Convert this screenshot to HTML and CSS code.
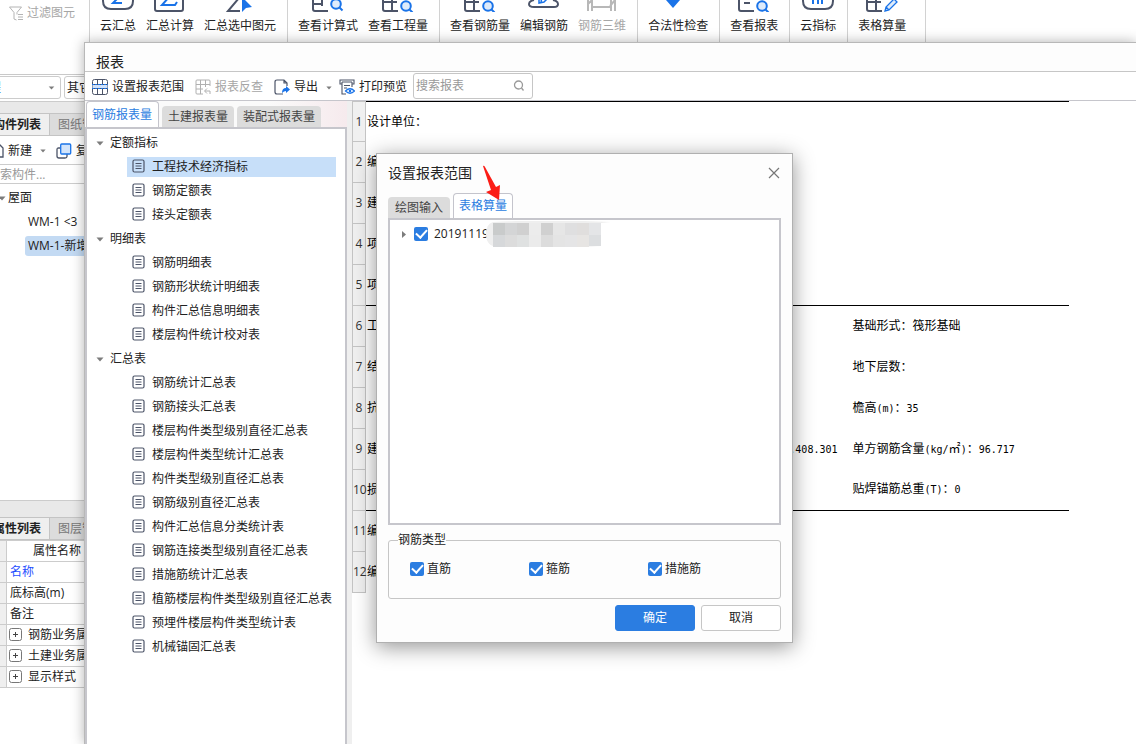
FILE: index.html
```html
<!DOCTYPE html>
<html lang="zh-CN">
<head>
<meta charset="utf-8">
<title>报表</title>
<link rel="stylesheet" href="styles.css">
</head>
<body>
<svg class="defs" width="0" height="0" aria-hidden="true">
  <symbol id="doc" viewBox="0 0 13 14"><rect x="1" y="1" width="11" height="12" rx="1.5" fill="none" stroke="#4c5468" stroke-width="1.2"/><path d="M3.5 4.5h6M3.5 7h6M3.5 9.5h6" stroke="#4c5468" stroke-width="1"/></symbol>
  <symbol id="down" viewBox="0 0 8 5"><path d="M0.5 0.5h7L4 4.5z" fill="#7c7c7c"/></symbol>
  <symbol id="plus" viewBox="0 0 13 13"><rect x=".5" y=".5" width="12" height="12" rx="2" fill="#fff" stroke="#777"/><path d="M4 6.500h5M6.500 4v5" stroke="#444"/></symbol>
  <symbol id="lens" viewBox="0 0 14 14"><circle cx="6" cy="6" r="4.800" fill="#deebfb" stroke="#1a73e8" stroke-width="2"/><path d="M9.500 9.500l3 3" stroke="#1a73e8" stroke-width="2"/></symbol>
</svg>

<div class="app">
  <nav class="ribbon">
    <div class="group filter">
      <button class="flat muted"><svg width="14" height="15" viewBox="0 0 14 15" fill="none" stroke="#b4b4b4"><path d="M.5 1h12L8 6.500v2M.5 1L5 6.500V13l2.500 1M9 8.500h5M9 11h5M9 13.500h5"/></svg>过滤图元</button>
    </div>
    <div class="group">
      <button class="tool"><svg width="32" height="12" fill="none" stroke-width="2"><path d="M1 0v1q0 8 8 8h14q8 0 8-8V0" stroke="#4c5468"/><path d="M17-3l-6 6h9" stroke="#1a73e8"/></svg>云汇总</button>
      <button class="tool"><svg width="32" height="12" fill="none" stroke-width="2"><path d="M1 0v9q0 2 2 2h24q2 0 2-2V0" stroke="#4c5468"/><path d="M16-4L8 5h13l2-3" stroke="#1a73e8"/></svg>汇总计算</button>
      <button class="tool"><svg width="32" height="12" fill="none"><path d="M15-2L4 11h12" stroke="#4c5468" stroke-width="2"/><path d="M18-3v15l4-4 6-1z" fill="#1a73e8"/></svg>汇总选中图元</button>
    </div>
    <div class="group">
      <button class="tool"><svg width="32" height="12" fill="none" stroke="#4c5468" stroke-width="2"><path d="M1 0v9q0 2 2 2h13M2 4h8V0M10 4v2"/><use href="#lens" x="18" y="-2" width="14" height="14"/></svg>查看计算式</button>
      <button class="tool"><svg width="32" height="12" fill="none" stroke="#4c5468" stroke-width="2"><path d="M1 0v9q0 2 2 2h13M2 2h13M10 0v11"/><use href="#lens" x="18" y="0" width="14" height="14"/></svg>查看工程量</button>
    </div>
    <div class="group">
      <button class="tool"><svg width="32" height="12" fill="none" stroke="#4c5468" stroke-width="2"><path d="M1 0v9q0 2 2 2h13M2 2h13M10 0v11"/><use href="#lens" x="18" y="0" width="14" height="14"/></svg>查看钢筋量</button>
      <button class="tool"><svg width="32" height="12" fill="none" stroke-width="2"><path d="M6 0Q1 1 1 4q0 3 5 3h20q4 0 4-3 0-3-5-4" stroke="#4c5468"/><path d="M11-3v6l5-1 5-5M14-3l-1 5" stroke="#1a73e8" stroke-width="1.500"/></svg>编辑钢筋</button>
      <button class="tool muted"><svg width="32" height="12" fill="none" stroke="#b8b8b8" stroke-width="2"><path d="M2 0v11M6 0v11M2 4l4-4M7 7h18M25 0v11M29 0v11M24 6l5-6"/></svg>钢筋三维</button>
    </div>
    <div class="group">
      <button class="tool"><svg width="32" height="12"><path d="M4 0h14l-7 8z" fill="#1a73e8"/></svg>合法性检查</button>
    </div>
    <div class="group">
      <button class="tool"><svg width="32" height="12" fill="none" stroke="#4c5468" stroke-width="2"><path d="M1 0v9q0 2 2 2h13M6 3h6"/><use href="#lens" x="18" y="0" width="14" height="14"/></svg>查看报表</button>
    </div>
    <div class="group">
      <button class="tool"><svg width="32" height="12" fill="none" stroke-width="2"><path d="M1 0v1q0 8 8 8h14q8 0 8-8V0" stroke="#4c5468"/><path d="M11 0v4M16 0v4M20 0v4" stroke="#1a73e8"/></svg>云指标</button>
    </div>
    <div class="group last">
      <button class="tool"><svg width="32" height="12" fill="none"><path d="M1 0v9q0 2 2 2h13M2 2h13M10 0v11" stroke="#4c5468" stroke-width="2"/><path d="M19 11l1-4 8-8 3 3-8 8zM20 7l3 3" stroke="#1a73e8" stroke-width="1.300" fill="#deebfb"/></svg>表格算量</button>
    </div>
  </nav>

  <aside class="sidebar">
    <div class="pickers">
      <button class="picker blue"><span>程</span><svg width="7" height="4"><use href="#down"/></svg></button>
      <button class="picker">其它</button>
    </div>
    <section class="components">
      <div class="side-tabs"><button class="side-tab on">构件列表</button><button class="side-tab">图纸管</button></div>
      <div class="side-tools">
        <button class="flat"><svg width="12" height="14" viewBox="0 0 12 14" fill="none" stroke="#4c5468" stroke-width="1.300"><path d="M2 1h6l3 3v9H2z"/></svg>新建</button>
        <svg class="drop" width="6" height="4"><use href="#down"/></svg>
        <button class="flat"><svg width="16" height="16" viewBox="0 0 16 16"><path d="M4 5H2.500Q1 5 1 6.500V13q0 2 2 2h6q2 0 2-1.500V11" fill="none" stroke="#4c5468" stroke-width="1.300"/><rect x="4.700" y="1" width="10" height="10" rx="1" fill="#d2e4fb" stroke="#1a73e8" stroke-width="1.300"/></svg>复</button>
      </div>
      <input class="side-search" type="text" placeholder="搜索构件..." aria-label="搜索构件">
      <ul class="side-tree">
        <li class="root"><svg width="8" height="5"><use href="#down"/></svg>屋面</li>
        <li><span>WM-1 &lt;3</span></li>
        <li class="on"><span>WM-1-新增</span></li>
      </ul>
    </section>
    <section class="props">
      <div class="side-tabs"><button class="side-tab on">属性列表</button><button class="side-tab">图层管</button></div>
      <table class="prop-table">
        <tr><th></th><th scope="col" class="head">属性名称</th></tr>
        <tr><th></th><td class="name">名称</td></tr>
        <tr><th></th><td>底标高(m)</td></tr>
        <tr><th></th><td>备注</td></tr>
        <tr><th></th><td><svg width="13" height="13"><use href="#plus"/></svg>钢筋业务属</td></tr>
        <tr><th></th><td><svg width="13" height="13"><use href="#plus"/></svg>土建业务属</td></tr>
        <tr><th></th><td><svg width="13" height="13"><use href="#plus"/></svg>显示样式</td></tr>
      </table>
    </section>
  </aside>
</div>

<main class="report-window">
  <h1 class="title">报表</h1>
  <div class="toolbar">
    <button class="flat"><svg width="16" height="16" viewBox="0 0 16 16" fill="none" stroke="#4c5468"><path d="M.5 5V2.500q0-2 2-2h11q2 0 2 2V5M.5 10v3.500q0 2 2 2h11q2 0 2-2V10M5.500 1v4M10.500 1v4M5.500 10v5M10.500 10v5"/><path d="M0 5.500h16v4H0z" fill="#cfe2fb"/><path d="M0 5.500h16M0 9.500h16" stroke="#1a73e8" stroke-dasharray="2 1"/></svg>设置报表范围</button>
    <button class="flat muted"><svg width="16" height="16" viewBox="0 0 16 16" fill="none" stroke="#b0b0b0"><path d="M15 7V2q0-1-1-1H2Q1 1 1 2v12q0 1 1 1h6M1 5.500h14M1 10h7M5.500 1v14M10.500 1v7M15 15v-3h-5M12 9.500L9.500 12l2.500 2.500"/></svg>报表反查</button>
    <button class="flat"><svg width="16" height="16" viewBox="0 0 16 16" fill="none"><path d="M9 15H3q-2 0-2-2V3q0-2 2-2h7l3 3v3M10 1v3h3" stroke="#4c5468" stroke-width="1.200"/><path d="M8 14q0-5 4-5V7l4 3.500-4 3.500v-2q-2 0-4 2z" fill="#1a73e8"/></svg>导出</button>
    <svg class="drop" width="6" height="4"><use href="#down"/></svg>
    <button class="flat"><svg width="16" height="16" viewBox="0 0 16 16" fill="none"><path d="M3 5H1V1h14v4h-2M3 3h10M3 3v12h4M13 3v5M5 6.500h6M5 9h3" stroke="#4c5468" stroke-width="1.100"/><path d="M6.500 12Q11 7.500 15.500 12 11 16.500 6.500 12z" fill="#fff" stroke="#1a73e8" stroke-width="1.200"/><circle cx="11" cy="12" r="1.300" fill="#1a73e8"/></svg>打印预览</button>
    <label class="search"><input type="text" placeholder="搜索报表" aria-label="搜索报表"><svg width="12" height="12" viewBox="0 0 12 12" fill="none" stroke="#999" stroke-width="1.300"><circle cx="5.500" cy="5" r="4"/><path d="M8.500 8l2 2.500"/></svg></label>
  </div>
  <div class="work">
    <section class="pane">
      <div class="tabs">
        <button class="tab on">钢筋报表量</button><button class="tab">土建报表量</button><button class="tab">装配式报表量</button>
      </div>
      <div class="tree">
        <h2><svg width="8" height="5"><use href="#down"/></svg>定额指标</h2>
        <ul>
          <li class="on"><svg width="13" height="14"><use href="#doc"/></svg>工程技术经济指标</li>
          <li><svg width="13" height="14"><use href="#doc"/></svg>钢筋定额表</li>
          <li><svg width="13" height="14"><use href="#doc"/></svg>接头定额表</li>
        </ul>
        <h2><svg width="8" height="5"><use href="#down"/></svg>明细表</h2>
        <ul>
          <li><svg width="13" height="14"><use href="#doc"/></svg>钢筋明细表</li>
          <li><svg width="13" height="14"><use href="#doc"/></svg>钢筋形状统计明细表</li>
          <li><svg width="13" height="14"><use href="#doc"/></svg>构件汇总信息明细表</li>
          <li><svg width="13" height="14"><use href="#doc"/></svg>楼层构件统计校对表</li>
        </ul>
        <h2><svg width="8" height="5"><use href="#down"/></svg>汇总表</h2>
        <ul>
          <li><svg width="13" height="14"><use href="#doc"/></svg>钢筋统计汇总表</li>
          <li><svg width="13" height="14"><use href="#doc"/></svg>钢筋接头汇总表</li>
          <li><svg width="13" height="14"><use href="#doc"/></svg>楼层构件类型级别直径汇总表</li>
          <li><svg width="13" height="14"><use href="#doc"/></svg>楼层构件类型统计汇总表</li>
          <li><svg width="13" height="14"><use href="#doc"/></svg>构件类型级别直径汇总表</li>
          <li><svg width="13" height="14"><use href="#doc"/></svg>钢筋级别直径汇总表</li>
          <li><svg width="13" height="14"><use href="#doc"/></svg>构件汇总信息分类统计表</li>
          <li><svg width="13" height="14"><use href="#doc"/></svg>钢筋连接类型级别直径汇总表</li>
          <li><svg width="13" height="14"><use href="#doc"/></svg>措施筋统计汇总表</li>
          <li><svg width="13" height="14"><use href="#doc"/></svg>植筋楼层构件类型级别直径汇总表</li>
          <li><svg width="13" height="14"><use href="#doc"/></svg>预埋件楼层构件类型统计表</li>
          <li><svg width="13" height="14"><use href="#doc"/></svg>机械锚固汇总表</li>
        </ul>
      </div>
    </section>
    <section class="sheet">
      <table class="report">
        <colgroup><col class="c-num"><col class="c-a"><col class="c-b"><col class="c-c"></colgroup>
        <tr class="rule first"><th scope="row">1</th><td>设计单位：</td><td></td><td></td></tr>
        <tr><th scope="row">2</th><td>编</td><td></td><td></td></tr>
        <tr><th scope="row">3</th><td>建</td><td></td><td></td></tr>
        <tr><th scope="row">4</th><td>项</td><td></td><td></td></tr>
        <tr><th scope="row">5</th><td>项</td><td></td><td></td></tr>
        <tr class="rule"><th scope="row">6</th><td>工</td><td></td><td>基础形式：筏形基础</td></tr>
        <tr><th scope="row">7</th><td>结</td><td></td><td>地下层数：</td></tr>
        <tr><th scope="row">8</th><td>抗</td><td></td><td>檐高<span class="half">(m)</span>：<span class="half">35</span></td></tr>
        <tr><th scope="row">9</th><td>建</td><td class="end"><span class="half">.408.301</span></td><td>单方钢筋含量<span class="half">(kg/</span>㎡<span class="half">)</span>：<span class="half">96.717</span></td></tr>
        <tr><th scope="row">10</th><td>损</td><td></td><td>贴焊锚筋总重<span class="half">(T)</span>：<span class="half">0</span></td></tr>
        <tr class="rule"><th scope="row">11</th><td>编</td><td></td><td></td></tr>
        <tr><th scope="row">12</th><td>编</td><td></td><td></td></tr>
      </table>
    </section>
  </div>
</main>

<div class="dialog" role="dialog" aria-labelledby="dlg-title">
  <header class="dlg-head">
    <h2 id="dlg-title">设置报表范围</h2>
    <button class="close" aria-label="关闭"><svg width="12" height="12" viewBox="0 0 12 12" stroke="#777" stroke-width="1.200"><path d="M1 1l10 10M11 1L1 11"/></svg></button>
  </header>
  <div class="dlg-tabs"><button class="tab">绘图输入</button><button class="tab on">表格算量</button></div>
  <div class="list">
    <div class="list-row">
      <svg width="4" height="7"><path d="M0 0l4 3.500L0 7z" fill="#7c7c7c"/></svg>
      <label class="check"><input type="checkbox" checked>20191119</label>
      <svg class="mosaic" width="125" height="26" viewBox="0 0 125 26" aria-hidden="true">
        <path d="M7 1Q60-2 125 1L115 2v23l-20 1H11Q0 25 0 13 0 3 7 1z" fill="#efefef"/>
        <path d="M7 2h12v12H7z" fill="#c9cbcb"/><path d="M19 2h12v12H19z" fill="#d4d5d6"/><path d="M31 2h12v12H31z" fill="#d0d0d0"/><path d="M43 2h12v12H43z" fill="#ececec"/><path d="M55 2h12v12H55z" fill="#d0d0d0"/><path d="M67 2h12v12H67z" fill="#e6e6e6"/><path d="M79 2h12v12H79z" fill="#dfdfe0"/><path d="M91 2h12v12H91z" fill="#e0dedd"/><path d="M103 2h12v12h-12z" fill="#e4e5e7"/>
        <path d="M7 14h12v12H7z" fill="#d6d8da"/><path d="M19 14h12v12H19z" fill="#dcdcdc"/><path d="M31 14h12v12H31z" fill="#dfe1e1"/><path d="M43 14h12v12H43z" fill="#ebebeb"/><path d="M55 14h12v12H55z" fill="#dcdcdc"/><path d="M67 14h12v12H67z" fill="#e4e4e4"/><path d="M79 14h12v12H79z" fill="#e5e5e6"/><path d="M91 14h12v12H91z" fill="#e7e5e3"/><path d="M103 14h12v11h-12z" fill="#dcdee0"/>
      </svg>
    </div>
  </div>
  <fieldset class="types">
    <legend>钢筋类型</legend>
    <label class="check"><input type="checkbox" checked>直筋</label>
    <label class="check"><input type="checkbox" checked>箍筋</label>
    <label class="check"><input type="checkbox" checked>措施筋</label>
  </fieldset>
  <footer class="actions"><button class="btn primary">确定</button><button class="btn">取消</button></footer>
  <svg class="pointer" width="20" height="37" viewBox="0 0 20 37" aria-hidden="true"><path d="M1 1Q2 0 3 2L14 22l4-2-1 15L4 27l5-2z" fill="#fb1d16"/></svg>
</div>
</body>
</html>
```
FILE: styles.css
```css
* { box-sizing: border-box; }

body {
  margin: 0;
  height: 100vh;
  overflow: hidden;
  position: relative;
  background: #fff;
  color: #222;
  font: 12px/16px "Open Sans", "Noto Sans CJK SC", sans-serif;
}

button, input { font: inherit; color: inherit; }
button { margin: 0; padding: 0; border: 0; background: none; white-space: nowrap; }
h1, h2, ul { margin: 0; padding: 0; font-weight: normal; list-style: none; }
svg { flex: none; display: block; }
.defs { position: absolute; }
.flat { display: flex; align-items: center; gap: 4px; }
.muted { color: #a6a6a6; }

/* main window */
.app { height: 100vh; display: flex; flex-direction: column; }
.ribbon { display: flex; height: 75px; border-bottom: 1px solid #c9c9c9; }
.group { display: flex; align-items: flex-start; gap: 10px; padding: 0 11px 0 10px; border-right: 1px solid #d2d2d2; }
.group.filter { width: 90px; padding: 5px 9px; }
.group.last { padding-right: 19px; }
.tool { display: flex; flex-direction: column; align-items: center; gap: 6px; }
.tool svg { overflow: hidden; }

.sidebar { flex: 1; width: 260px; margin-left: -12px; display: flex; flex-direction: column; background: #e9e9e9; }
.pickers { display: flex; gap: 3px; padding: 1px 0 2px; background: #fff; border-bottom: 1px solid #ccc; }
.picker { display: flex; align-items: center; justify-content: space-between; width: 73px; height: 23px; padding: 0 5px 0 2px; border: 1px solid #ccc; border-radius: 3px; background: #fff; }
.picker + .picker { padding-left: 2px; }
.picker.blue span { color: #1a73e8; }
.picker.blue { padding-left: 0; }
.components { flex: 1; margin-top: 11px; display: flex; flex-direction: column; background: #fff; border-bottom: 1px solid #ccc; }
.side-tabs { display: flex; height: 23px; background: #dcdcdc; border-top: 1px solid #c4c4c4; border-bottom: 1px solid #c4c4c4; }
.side-tab { padding: 0 8px; color: #777; }
.side-tab.on { width: 62px; padding: 0 8px 0 5px; border-right: 1px solid #c4c4c4; background: #efefef; color: #222; font-weight: bold; }
.side-tools { display: flex; align-items: center; height: 28px; padding: 2px 0 0 4px; }
.side-tools .drop { margin: 0 10px 0 8px; }
.side-search { width: 100%; height: 20px; padding: 0; border: solid #ccc; border-width: 1px 0; background: #fff; }
input::placeholder { color: #999; opacity: 1; }
.side-tree { padding-top: 2px; }
.side-tree li { display: flex; align-items: center; height: 24px; padding-left: 37px; }
.side-tree .root { padding-left: 10px; gap: 2px; }
.side-tree span { padding: 2px 3px; flex: 1; border-radius: 3px; }
.side-tree .on span { background: #c3daf3; }

.props { height: 227px; margin-top: 16px; background: #fff; }
.prop-table { width: 100%; border-collapse: collapse; background: #fff; }
.prop-table th, .prop-table td { height: 21px; padding: 0 0 0 3px; border: 1px solid #ccc; text-align: left; font-weight: normal; white-space: nowrap; }
.prop-table th:first-child { width: 18px; padding: 0; background: #efefef; }
.prop-table .head { padding-left: 26px; }
.prop-table .name { color: #1f4fff; }
.prop-table svg { display: inline-block; vertical-align: -2px; margin: 0 6px 0 -1px; }

/* report window */
.report-window {
  position: absolute;
  inset: 42px 0 0 84px;
  display: flex;
  flex-direction: column;
  border: solid #b8b8b8;
  border-width: 1px 0 0 1px;
  background: #fff;
  box-shadow: 0 0 12px rgba(0, 0, 0, .3);
}
.title { height: 29px; padding: 0 11px; border-bottom: 1px solid #c6c6c6; background: #fdfdfd; font-size: 14px; line-height: 38px; }
.toolbar { display: flex; align-items: center; height: 29px; padding-left: 7px; border-bottom: 1px solid #c6c6cc; }
.toolbar .flat { padding-top: 2px; }
.toolbar .flat + .flat { margin-left: 11px; }
.toolbar .drop { margin: 3px 7px 0 8px; }
.search { display: flex; align-items: center; width: 120px; height: 26px; margin-left: 6px; padding: 0 7px 0 2px; border: 1px solid #c6c6c6; border-radius: 3px; }
.search input { flex: 1; min-width: 0; padding: 0; border: 0; outline: 0; background: none; }
.work { flex: 1; display: flex; min-height: 0; }
.pane { width: 267px; flex: none; display: flex; flex-direction: column; padding-right: 5px; background: #efefef; }
.tabs, .dlg-tabs { display: flex; align-items: flex-end; gap: 3px; height: 26px; }
.tabs { background: linear-gradient(90deg, #fafafa 70%, #f6eaed); }
.tab { height: 21px; padding: 0 6px; border-radius: 4px 4px 0 0; background: #dcdcdc; color: #444; }
.tab.on { height: 26px; padding: 0 6px 0 5px; border: 1px solid #c4c4cc; border-bottom: 0; background: #fff; color: #2b7de1; }
.tabs .on { margin-left: 1px; }
.tree { flex: 1; padding: 2px 9px 0 9px; border: 2px solid #c6c6cc; border-bottom: 0; background: #fff; }
.tree h2 { display: flex; align-items: center; gap: 6px; height: 24px; font-size: 12px; }
.tree ul { display: flow-root; padding-left: 31px; }
.tree li { display: flex; align-items: center; gap: 7px; height: 20px; margin: 2px 0; padding: 0 5px; white-space: nowrap; }
.tree li svg { margin-bottom: 2px; }
.tree li + li { margin-top: 4px; }
.tree .on { background: #c7dff9; }

.sheet { flex: 1; overflow: hidden; }
.report { table-layout: fixed; width: 717px; border-collapse: collapse; color: #000; }
.c-num { width: 13px; }
.c-a { width: 240px; }
.c-b { width: 246px; }
.report th { height: 41px; padding: 0; border: 1px solid #c4c4c4; background: #f0f0f0; color: #333; font-weight: normal; }
.report .first th { height: 40px; }
.report td { padding: 0 1px; white-space: nowrap; }
.report .rule td { border-top: 1px solid #000; }
.report .end { padding-right: 14px; text-align: right; }
.half { font-family: "DejaVu Sans Mono", monospace; font-size: 10px; }

/* range dialog */
.dialog {
  position: absolute;
  left: 376px;
  top: 153px;
  width: 417px;
  padding: 0 11px 11px;
  border: 1px solid #b0b0b0;
  background: #fdfdfd;
  box-shadow: 0 4px 20px rgba(0, 0, 0, .42);
}
.dlg-head { display: flex; align-items: center; justify-content: space-between; height: 39px; padding-bottom: 2px; }
.dlg-head h2 { font-size: 14px; }
.close { padding: 0 1px; }
.list { height: 307px; padding: 4px 12px; border: 2px solid #c6c6cc; background: #fff; }
.dlg-tabs { height: 25px; }
.dlg-tabs .tab { padding: 0 7px; }
.dlg-tabs .tab.on { height: 25px; padding: 0 5px; }
.list-row { position: relative; display: flex; align-items: center; gap: 8px; height: 20px; }
.mosaic { position: absolute; left: 84px; top: -3px; }
.check { display: flex; align-items: center; gap: 3px; }
.list .check { gap: 6px; }
.check input { appearance: none; display: grid; place-items: center; width: 14px; height: 14px; margin: 0; border-radius: 2px; background: #2b7de1; }
.check input:checked::after { content: ""; width: 5px; height: 9px; margin-bottom: 3px; border: solid #fff; border-width: 0 2px 2px 0; transform: rotate(42deg); }
.types { display: grid; grid-template-columns: repeat(3, 119px); height: 67px; margin: 7px 0 6px; padding: 12px 0 20px 21px; border: 1px solid #c6c6c6; border-radius: 3px; }
.types legend { margin-left: -12px; padding: 0; }
.actions { display: flex; justify-content: flex-end; gap: 6px; }
.btn { width: 80px; height: 26px; border: 1px solid #c6c6c6; border-radius: 3px; background: #fff; }
.btn.primary { border-color: #2b7de1; background: #2b7de1; color: #fff; }
.pointer { position: absolute; left: 105px; top: 11px; }
```
